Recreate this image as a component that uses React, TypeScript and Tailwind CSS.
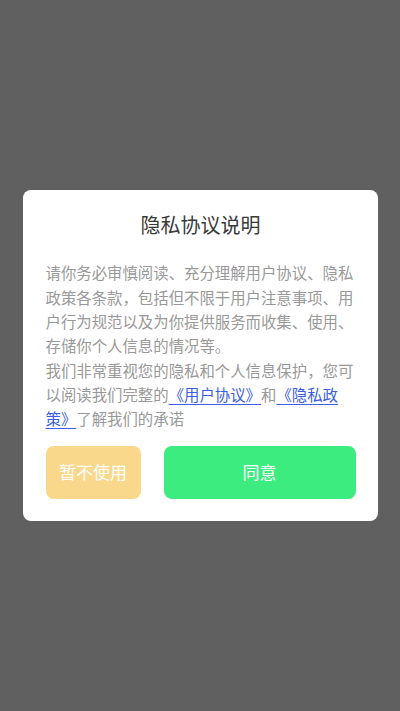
const FONT = { fontFamily: '"Noto Sans CJK SC", "Noto Sans", sans-serif' };

export default function App() {
  return (
    <div className="flex h-[711px] w-full items-center justify-center bg-[#606060]" style={FONT}>
      <div className="w-[355px] rounded-[8px] bg-white pb-[22px] pl-[23px] pr-[22px] pt-[21px]">
        <h1 className="text-center text-[20px] leading-[28px] text-[#3a3a3a]">隐私协议说明</h1>

        <div className="mt-[21px] text-[15.4px] leading-[24.3px] text-[#999999]">
          <p>请你务必审慎阅读、充分理解用户协议、隐私政策各条款，包括但不限于用户注意事项、用户行为规范以及为你提供服务而收集、使用、存储你个人信息的情况等。</p>
          <p>
            我们非常重视您的隐私和个人信息保护，您可以阅读我们完整的
            <a className="text-[#3b5de7] underline underline-offset-[3px]">《用户协议》</a>
            和
            <a className="text-[#3b5de7] underline underline-offset-[3px]">《隐私政策》</a>
            了解我们的承诺
          </p>
        </div>

        <div className="mt-[15px] flex gap-[23px]">
          <button className="h-[53px] w-[95px] rounded-[8px] bg-[#fad88b] text-[17px] text-white">暂不使用</button>
          <button className="h-[53px] flex-1 rounded-[8px] bg-[#3dec7f] text-[17px] text-white">同意</button>
        </div>
      </div>
    </div>
  );
}
